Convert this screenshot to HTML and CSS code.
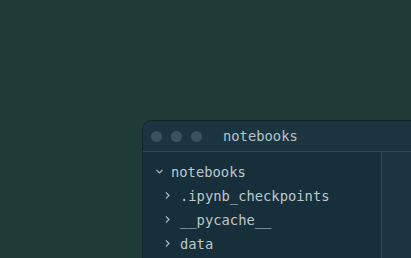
FILE: index.html
```html
<!DOCTYPE html>
<html lang="en">
<head>
    <meta charset="UTF-8">
    <title>notebooks</title>
    <link rel="stylesheet" href="styles.css">
</head>
<body>
    <div class="stage">
        <div class="window">
            <div class="titlebar">
                <div class="lights">
                    <span class="dot"></span>
                    <span class="dot"></span>
                    <span class="dot"></span>
                </div>
                <div class="title">notebooks</div>
            </div>
            <div class="body">
                <div class="sidebar">
                    <div class="row root">
                        <svg class="chev" width="16" height="10" viewBox="0 0 16 10"><path d="M1.5 3 L4.5 6 L7.5 3" fill="none" stroke="#a9b7bc" stroke-width="1.2"/></svg>notebooks
                    </div>
                    <div class="row child">
                        <svg class="chev" width="16" height="10" viewBox="0 0 16 10"><path d="M2 1.5 L5 4.5 L2 7.5" fill="none" stroke="#a9b7bc" stroke-width="1.2"/></svg>.ipynb_checkpoints
                    </div>
                    <div class="row child">
                        <svg class="chev" width="16" height="10" viewBox="0 0 16 10"><path d="M2 1.5 L5 4.5 L2 7.5" fill="none" stroke="#a9b7bc" stroke-width="1.2"/></svg>__pycache__
                    </div>
                    <div class="row child">
                        <svg class="chev" width="16" height="10" viewBox="0 0 16 10"><path d="M2 1.5 L5 4.5 L2 7.5" fill="none" stroke="#a9b7bc" stroke-width="1.2"/></svg>data
                    </div>
                </div>
                <div class="main"></div>
            </div>
        </div>
    </div>
</body>
</html>
```

FILE: styles.css
```css
html, body {
    margin: 0;
    height: 100%;
    background: #1e3b37;
    overflow: hidden;
}
.stage {
    width: 411px;
    height: 258px;
    overflow: hidden;
    box-sizing: border-box;
    padding: 120px 0 0 142px;
}
.window {
    width: 290px;
    height: 160px;
    background: #1a3540;
    border: 1px solid #11262c;
    border-radius: 9px;
    overflow: hidden;
    font-family: "DejaVu Sans Mono", "Liberation Mono", monospace;
    font-size: 13.8px;
    color: #bcc8cc;
}
.titlebar {
    display: flex;
    align-items: center;
    height: 30px;
    border-bottom: 1px solid #2d4a55;
}
.lights {
    display: flex;
    gap: 9px;
    padding-left: 8px;
}
.dot {
    width: 11px;
    height: 11px;
    border-radius: 50%;
    background: #38535d;
}
.title {
    margin-left: 21px;
    color: #b5c3c8;
}
.body {
    display: flex;
    height: 100%;
}
.sidebar {
    width: 238px;
    background: #172f3a;
    border-right: 1px solid #2d4a55;
    padding-top: 8px;
}
.main {
    flex: 1;
}
.row {
    display: flex;
    align-items: center;
    height: 24px;
}
.chev {
    flex: none;
}
.root {
    padding-left: 12px;
}
.child {
    padding-left: 21px;
}
```
